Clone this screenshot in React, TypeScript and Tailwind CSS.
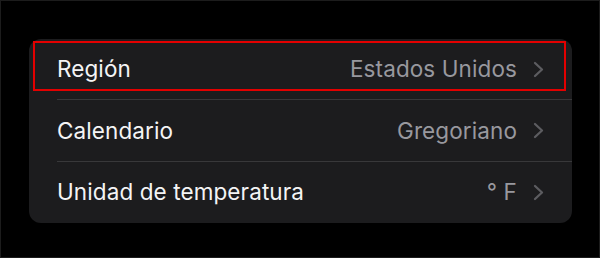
import React from 'react';

const rows = [
  { label: 'Región', value: 'Estados Unidos' },
  { label: 'Calendario', value: 'Gregoriano' },
  { label: 'Unidad de temperatura', value: '° F' },
];

function Chevron() {
  return (
    <svg width="11" height="17" viewBox="0 0 11 17" fill="none" className="ml-[16px] shrink-0">
      <path d="M2 2 L9 8.5 L2 15" stroke="#5c5c60" strokeWidth="2.3" strokeLinecap="round" strokeLinejoin="round" />
    </svg>
  );
}

export default function App() {
  return (
    <div className="w-[600px] h-[258px] bg-black border border-[#1c1c1c] pt-[38px] pl-[28px] font-['Inter','Roboto',sans-serif]">
      <div className="relative w-[543px] h-[184px] rounded-[12px] bg-[#1c1c1e] flex flex-col">
        {rows.map((row, i) => (
          <div key={i} className="pl-[28px] flex-1 flex">
            <div
              className={`flex-1 flex items-center pr-[28px] text-[22.5px] tracking-[0.1px] ${
                i < rows.length - 1 ? 'border-b border-[#38383a]' : ''
              }`}
            >
              <span className="text-[#f4f4f5] flex-1">{row.label}</span>
              <span className="text-[#98989e]">{row.value}</span>
              <Chevron />
            </div>
          </div>
        ))}
        {/* highlight box */}
        <div className="absolute left-[4px] top-[2px] right-[6px] h-[50px] border-2 border-[#e30000] pointer-events-none" />
      </div>
    </div>
  );
}
